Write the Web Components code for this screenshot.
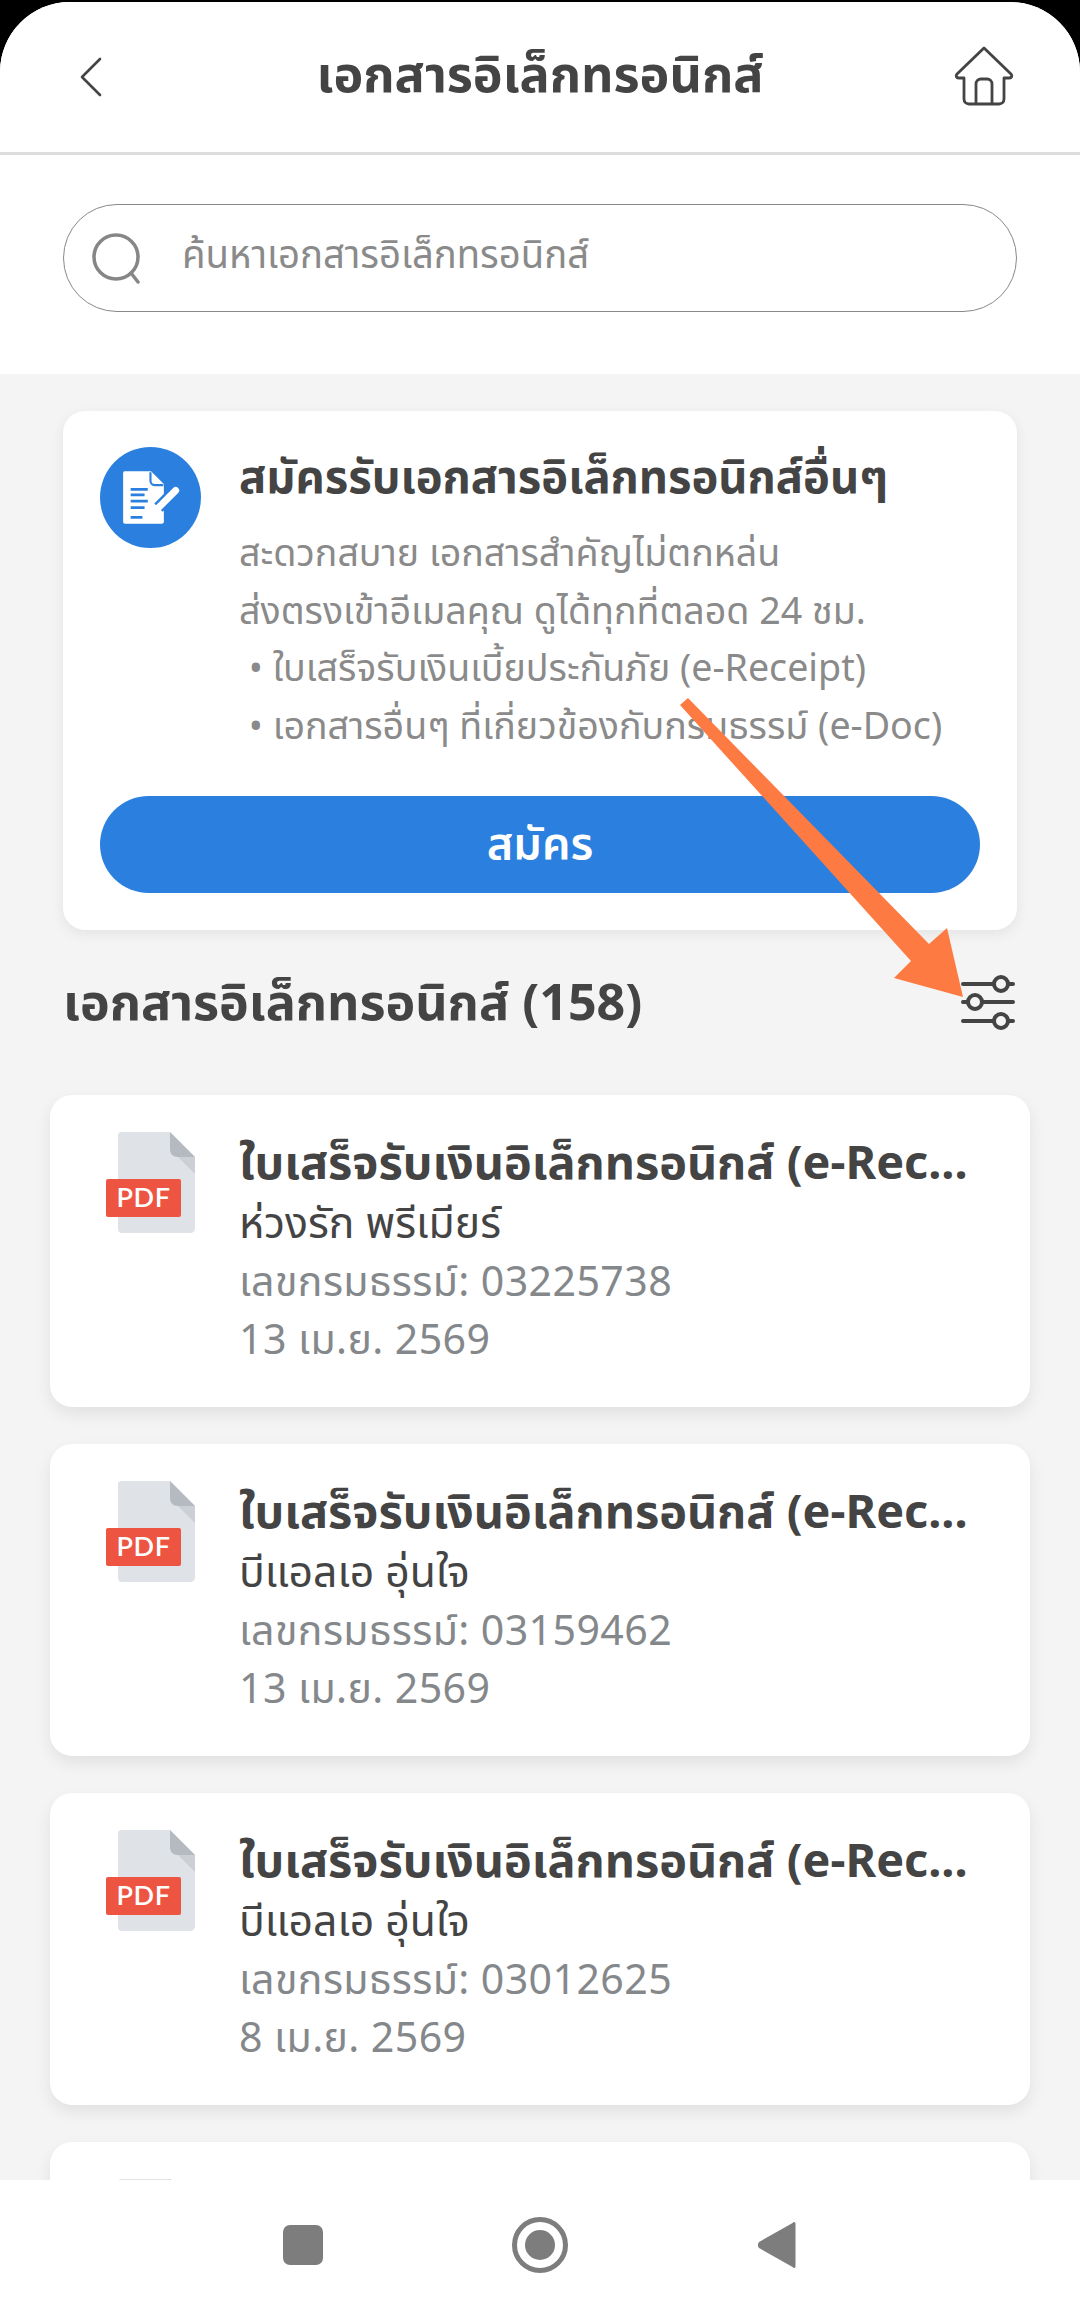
<!DOCTYPE html>
<html lang="th"><head><meta charset="utf-8"><title>เอกสารอิเล็กทรอนิกส์</title>
<style>
html,body{margin:0;padding:0;background:#000;}
body{font-family:"Noto Sans","Noto Sans Thai","Open Sans",sans-serif;color:#444;}
</style></head><body>
<app-shell>
  <top-bar title="เอกสารอิเล็กทรอนิกส์"></top-bar>
  <search-box placeholder="ค้นหาเอกสารอิเล็กทรอนิกส์"></search-box>
  <main-area>
    <promo-card title="สมัครรับเอกสารอิเล็กทรอนิกส์อื่นๆ" action="สมัคร">
      <div>สะดวกสบาย เอกสารสำคัญไม่ตกหล่น</div>
      <div>ส่งตรงเข้าอีเมลคุณ ดูได้ทุกที่ตลอด 24 ชม.</div>
      <div>&nbsp;• ใบเสร็จรับเงินเบี้ยประกันภัย (e-Receipt)</div>
      <div>&nbsp;• เอกสารอื่นๆ ที่เกี่ยวข้องกับกรมธรรม์ (e-Doc)</div>
    </promo-card>
    <section-head title="เอกสารอิเล็กทรอนิกส์ (158)"></section-head>
    <doc-card title="ใบเสร็จรับเงินอิเล็กทรอนิกส์ (e-Rec..." plan="ห่วงรัก พรีเมียร์" policy="เลขกรมธรรม์: 03225738" date="13 เม.ย. 2569"></doc-card>
    <doc-card title="ใบเสร็จรับเงินอิเล็กทรอนิกส์ (e-Rec..." plan="บีแอลเอ อุ่นใจ" policy="เลขกรมธรรม์: 03159462" date="13 เม.ย. 2569"></doc-card>
    <doc-card title="ใบเสร็จรับเงินอิเล็กทรอนิกส์ (e-Rec..." plan="บีแอลเอ อุ่นใจ" policy="เลขกรมธรรม์: 03012625" date="8 เม.ย. 2569"></doc-card>
    <doc-card></doc-card>
  </main-area>
  <nav-bar></nav-bar>
  <arrow-mark></arrow-mark>
</app-shell>
<script>
function def(name, html){
  customElements.define(name, class extends HTMLElement{
    connectedCallback(){
      if(this.shadowRoot) return;
      const r=this.attachShadow({mode:'open'});
      r.innerHTML=typeof html==='function'?html(this):html;
    }
  });
}
const a=(el,n)=>el.getAttribute(n)||'';
def('app-shell',`<style>
:host{display:flex;flex-direction:column;position:relative;width:1080px;height:2308px;margin-top:2px;overflow:hidden;background:#fff;border-radius:70px 70px 0 0;}
</style><slot></slot>`);
def('top-bar',el=>`<style>
:host{display:block;flex:none;height:150px;border-bottom:3px solid #ddd;background:#fff;}
h1{margin:0 0 9px;font-size:50.300px;line-height:60px;font-weight:700;color:#444;white-space:nowrap;}
.bar{display:grid;grid-template-columns:1fr auto 1fr;height:100%;align-items:center;padding:0 66px;box-sizing:border-box;}
.back{margin-left:13px;}
.end{justify-self:end;margin-bottom:3px;}
svg{display:block;fill:none;stroke:#444;stroke-linecap:round;stroke-linejoin:round;}
</style><div class="bar">
<svg class="back" width="24" height="40" viewBox="0 0 24 40" stroke-width="2.6"><path d="M21 2 3 20l18 18"/></svg>
<h1>${a(el,'title')}</h1>
<svg class="end" width="60" height="60" viewBox="0 0 60 60" stroke-width="2.8"><path d="M30 2 3 28c-1.600 1.700-.6 4 1.600 4H10v21c0 3 2 5 5 5h30c3 0 5-2 5-5V32h5.400c2.200 0 3.200-2.300 1.600-4L30 2Z"/><path d="M22 57V38c0-3 2-5 5-5h6c3 0 5 2 5 5v19"/></svg>
</div>`);
def('search-box',el=>`<style>
:host{display:block;flex:none;padding:49px 63px 62px;background:#fff;}
.b{display:flex;align-items:center;height:108px;box-sizing:border-box;border:1.500px solid #888;border-radius:54px;padding:0 0 0 28px;gap:40px;color:#8a8a8a;font-size:38.300px;}
svg{display:block;flex:none;fill:none;stroke:#868686;stroke-width:3.500;stroke-linecap:round;}
span{padding-bottom:4px;white-space:nowrap;}
</style><div class="b"><svg width="50" height="52" viewBox="0 0 50 52"><circle cx="24" cy="25" r="22"/><path d="M39 41l7 9"/></svg><span>${a(el,'placeholder')}</span></div>`);
def('main-area',`<style>
:host{display:flex;flex-direction:column;flex:1;min-height:0;overflow:hidden;background:#f4f4f4;padding:37px 50px 0;gap:37px;}
</style><slot></slot>`);
def('promo-card',el=>`<style>
:host{display:block;flex:none;margin:0 13px;background:#fff;border-radius:22px;box-shadow:0 4px 14px rgba(0,0,0,.07);padding:36px 37px;height:519px;box-sizing:border-box;}
.top{display:flex;gap:38px;}
.ic{width:101px;height:101px;flex:none;border-radius:50%;background:#2b80df;display:flex;align-items:center;justify-content:center;}
h2{margin:0 0 18px;font-size:45.300px;line-height:58px;font-weight:700;color:#444;white-space:nowrap;}
.txt{font-size:37.600px;line-height:57.500px;color:#8a8a8a;white-space:nowrap;}
.btn{display:flex;align-items:center;justify-content:center;margin-top:43px;height:97px;border-radius:49px;background:#2b80df;color:#fff;font-size:45px;font-weight:600;}
</style><div class="top"><div class="ic"><svg width="60" height="60" viewBox="0 0 56 56">
<path fill="#fff" d="M4 3h24l12 12v35c0 1.500-1 2-2 2H4c-1.500 0-2-.5-2-2V5c0-1.500.5-2 2-2Z"/>
<path fill="none" stroke="#2b80df" stroke-width="2" d="M27.500 4v8c0 2 1.500 4 4 4h8"/>
<path stroke="#2b80df" stroke-width="2.600" d="M9 20h16M9 25h13M9 31h16M9 37h13M9 46h11"/>
<path stroke="#2b80df" stroke-width="11" d="M51 21 35 37"/>
<path stroke="#fff" stroke-width="6.500" stroke-linecap="round" d="M51 21 35 37"/>
<path fill="#fff" d="M31.500 34.500 38 41l-9 3z"/></svg></div>
<div><h2>${a(el,'title')}</h2><div class="txt"><slot></slot></div></div></div>
<div class="btn">${a(el,'action')}</div>`);
def('section-head',el=>`<style>
:host{display:flex;flex:none;align-items:center;justify-content:space-between;margin:-24px 15px 0 13px;height:115px;}
h3{margin:0;font-size:50.200px;line-height:60px;font-weight:700;color:#444;white-space:nowrap;}
svg{display:block;margin-top:3px;fill:none;stroke:#444;stroke-width:4;stroke-linecap:round;}
</style><h3>${a(el,'title')}</h3>
<svg width="54" height="56" viewBox="0 0 54 56"><path d="M2 10h31M47 10h5M2 28h5M21 28h31M2 47h31M47 47h5"/><circle cx="40" cy="10" r="7"/><circle cx="14" cy="28" r="7"/><circle cx="40" cy="47" r="7"/></svg>`);
def('doc-card',el=>`<style>
:host{display:flex;flex:none;height:312px;box-sizing:border-box;background:#fff;border-radius:22px;box-shadow:0 7px 16px rgba(0,0,0,.08);padding:37px 50px 0 56px;gap:44px;}
svg{display:block;flex:none;}
.t{min-width:0;flex:1;font-size:41.100px;line-height:57.500px;color:#85888b;}
.h{font-weight:700;color:#444;white-space:nowrap;font-size:46.800px;line-height:60px;margin-top:-1px;}
.p{color:#444;font-size:42.700px;line-height:60px;padding-top:1px;}
.m{letter-spacing:.4px;}
</style><svg width="89" height="101" viewBox="0 0 89 101">
<path fill="#dfe2e6" d="M16 0h48l25 25v71c0 3-2 5-5 5H16c-3 0-4-2-4-5V4c0-3 1-4 4-4Z"/>
<path fill="#b4bac0" d="M64 0l25 25H72c-5 0-8-3-8-8z"/><path fill="#ccd0d5" d="M72 25h17v17z"/>
<rect x="0" y="47" width="75" height="38" rx="2" fill="#ee5442"/>
<text x="37.500" y="75" text-anchor="middle" font-family="Lato,Inter,sans-serif" font-size="27" font-weight="600" fill="#fff" letter-spacing=".6">PDF</text></svg>
<div class="t">${el.hasAttribute('title')?`<div class="h">${a(el,'title')}</div><div class="p">${a(el,'plan')}</div><div class="m">${a(el,'policy')}</div><div class="m">${a(el,'date')}</div>`:''}</div>`);
def('nav-bar',`<style>
:host{display:block;position:absolute;left:0;right:0;bottom:0;height:130px;background:#fff;}
.r{display:flex;height:100%;align-items:center;justify-content:center;gap:188px;padding-right:2px;box-sizing:border-box;}
svg{display:block;}
</style><div class="r"><svg width="42" height="42" viewBox="0 0 42 42"><rect x="1" y="1" width="40" height="40" rx="7" fill="#7d7d7d"/></svg>
<svg width="56" height="56" viewBox="0 0 56 56"><circle cx="28" cy="28" r="25.500" fill="none" stroke="#7d7d7d" stroke-width="5"/><circle cx="28" cy="28" r="15" fill="#7d7d7d"/></svg>
<svg width="40" height="48" viewBox="0 0 40 48"><path fill="#7d7d7d" d="M38 1c1.200 0 1.500 1 1.500 2v42c0 1-.3 2-1.500 2-.6 0-1-.4-1.400-.9L3 27c-1.500-2-1.500-4 0-6L36.600 1.900c.4-.5.800-.9 1.400-.9Z"/></svg></div>`);
def('arrow-mark',`<style>
:host{position:absolute;left:0;top:-2px;width:1080px;height:2310px;pointer-events:none;display:block;}
svg{display:block;}
</style><svg width="1080" height="2310" viewBox="0 0 1080 2310"><path fill="#fd7a42" d="M680 705 688 698 929 944 947 928 963 997 894 978 911 961Z"/></svg>`);
</script>
</body></html>
